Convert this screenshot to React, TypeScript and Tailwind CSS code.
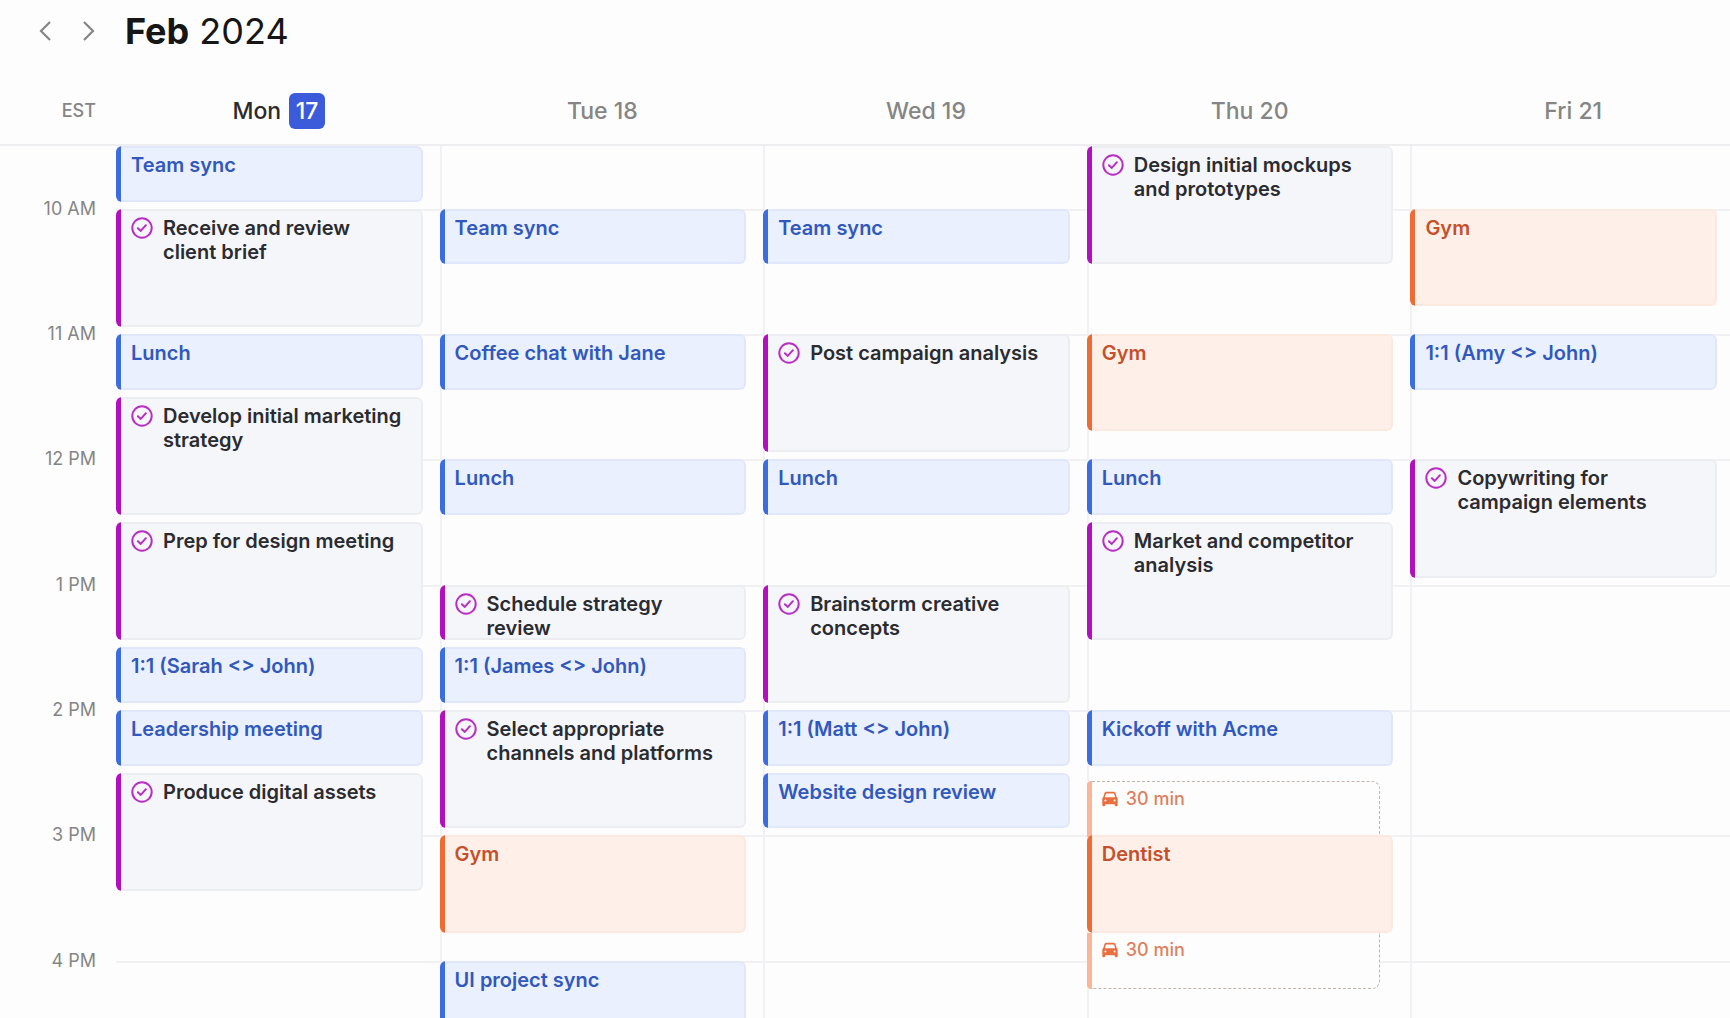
import React from 'react';
import clsx from 'clsx';

type Kind = 'meeting' | 'task' | 'personal';

type CalendarEvent = {
    title: string;
    kind: Kind;
    start: string;
    minutes: number;
    travel?: string;
};

type Day = {
    name: string;
    date: number;
    today?: boolean;
    events: CalendarEvent[];
};

// The visible part of the day starts at 9:30 and is cut in slots of 5 minutes
const DAY_START = 9 * 60 + 30;
const SLOT = 5;

const hours = [
    { label: '10 AM', time: '10:00' },
    { label: '11 AM', time: '11:00' },
    { label: '12 PM', time: '12:00' },
    { label: '1 PM', time: '13:00' },
    { label: '2 PM', time: '14:00' },
    { label: '3 PM', time: '15:00' },
    { label: '4 PM', time: '16:00' }
];

const days: Day[] = [
    {
        name: 'Mon',
        date: 17,
        today: true,
        events: [
            { title: 'Team sync', kind: 'meeting', start: '9:30', minutes: 30 },
            { title: 'Receive and review client brief', kind: 'task', start: '10:00', minutes: 60 },
            { title: 'Lunch', kind: 'meeting', start: '11:00', minutes: 30 },
            { title: 'Develop initial marketing strategy', kind: 'task', start: '11:30', minutes: 60 },
            { title: 'Prep for design meeting', kind: 'task', start: '12:30', minutes: 60 },
            { title: '1:1 (Sarah <> John)', kind: 'meeting', start: '13:30', minutes: 30 },
            { title: 'Leadership meeting', kind: 'meeting', start: '14:00', minutes: 30 },
            { title: 'Produce digital assets', kind: 'task', start: '14:30', minutes: 60 }
        ]
    },
    {
        name: 'Tue',
        date: 18,
        events: [
            { title: 'Team sync', kind: 'meeting', start: '10:00', minutes: 30 },
            { title: 'Coffee chat with Jane', kind: 'meeting', start: '11:00', minutes: 30 },
            { title: 'Lunch', kind: 'meeting', start: '12:00', minutes: 30 },
            { title: 'Schedule strategy review', kind: 'task', start: '13:00', minutes: 30 },
            { title: '1:1 (James <> John)', kind: 'meeting', start: '13:30', minutes: 30 },
            { title: 'Select appropriate channels and platforms', kind: 'task', start: '14:00', minutes: 60 },
            { title: 'Gym', kind: 'personal', start: '15:00', minutes: 50 },
            { title: 'UI project sync', kind: 'meeting', start: '16:00', minutes: 45 }
        ]
    },
    {
        name: 'Wed',
        date: 19,
        events: [
            { title: 'Team sync', kind: 'meeting', start: '10:00', minutes: 30 },
            { title: 'Post campaign analysis', kind: 'task', start: '11:00', minutes: 60 },
            { title: 'Lunch', kind: 'meeting', start: '12:00', minutes: 30 },
            { title: 'Brainstorm creative concepts', kind: 'task', start: '13:00', minutes: 60 },
            { title: '1:1 (Matt <> John)', kind: 'meeting', start: '14:00', minutes: 30 },
            { title: 'Website design review', kind: 'meeting', start: '14:30', minutes: 30 }
        ]
    },
    {
        name: 'Thu',
        date: 20,
        events: [
            { title: 'Design initial mockups and prototypes', kind: 'task', start: '9:30', minutes: 60 },
            { title: 'Gym', kind: 'personal', start: '11:00', minutes: 50 },
            { title: 'Lunch', kind: 'meeting', start: '12:00', minutes: 30 },
            { title: 'Market and competitor analysis', kind: 'task', start: '12:30', minutes: 60 },
            { title: 'Kickoff with Acme', kind: 'meeting', start: '14:00', minutes: 30 },
            { title: 'Dentist', kind: 'personal', start: '14:30', minutes: 110, travel: '30 min' }
        ]
    },
    {
        name: 'Fri',
        date: 21,
        events: [
            { title: 'Gym', kind: 'personal', start: '10:00', minutes: 50 },
            { title: '1:1 (Amy <> John)', kind: 'meeting', start: '11:00', minutes: 30 },
            { title: 'Copywriting for campaign elements', kind: 'task', start: '12:00', minutes: 60 }
        ]
    }
];

const boxStyles: Record<Kind, string> = {
    meeting: 'border-[#e1e7fa] bg-[#eaf0fe] text-[#3158bd]',
    task: 'border-[#ecedf1] bg-[#f5f6fa] text-[#2a2b30]',
    personal: 'border-[#fde8df] bg-[#fef0e9] text-[#c4512b]'
};

const barStyles: Record<Kind, string> = {
    meeting: 'bg-[#3b6ce0]',
    task: 'bg-[#b30fc0]',
    personal: 'bg-[#ee6b35]'
};

const rowOf = (time: string) => {
    const [h, m] = time.split(':').map(Number);
    return (h * 60 + m - DAY_START) / SLOT + 1;
};

const CheckIcon = () => (
    <svg viewBox="0 0 22 22" fill="none" stroke="#b92fc4" strokeWidth="2" strokeLinecap="round" strokeLinejoin="round" className="mt-px size-[22px] shrink-0" aria-hidden="true">
        <circle cx="11" cy="11" r="9.7" />
        <path d="M6.9 11.2 L9.8 13.9 L14.9 8.2" />
    </svg>
);

const CarIcon = () => (
    <svg viewBox="0 0 16 16" fill="#ea6f40" fillRule="evenodd" className="size-4" aria-hidden="true">
        <path d="M4.5 .8h7c1.1 0 1.9.6 2.2 1.6l.9 3.4c.7.5 1.1 1.3 1.1 2.2v6c0 .7-.4 1.2-1.1 1.2h-.8c-.7 0-1.1-.5-1.1-1.2v-.8H3.3v.8c0 .7-.4 1.2-1.1 1.2h-.8c-.7 0-1.1-.5-1.1-1.2V8c0-.9.4-1.7 1.1-2.2l.9-3.4C2.6 1.4 3.4.8 4.5.8zM4.700 2.400c-.5 0-.8.2-.9.6l-.9 3.200h10.200l-.9-3.200c-.1-.4-.4-.6-.9-.6zM3.400 8.500a1 1 0 1 0 0 2 1 1 0 0 0 0-2zM12.600 8.500a1 1 0 1 0 0 2 1 1 0 0 0 0-2z" />
    </svg>
);

const EventBox = ({ event }: { event: CalendarEvent }) => (
    <div className="flex h-full overflow-hidden rounded-md">
        <div className={clsx('w-[5px] shrink-0 rounded-l-sm', barStyles[event.kind])} />
        <div className={clsx('flex flex-1 gap-2.5 rounded-r-md border-2 border-l-0 pt-[5px] pr-4 pl-2.5 text-xl leading-6 font-semibold', boxStyles[event.kind])}>
            {event.kind === 'task' && <CheckIcon />}
            <span>{event.title}</span>
        </div>
    </div>
);

const TravelBox = ({ label, after }: { label: string; after?: boolean }) => (
    <div className="mr-[13px] flex h-14 bg-[#fdfdfd]">
        <div className={clsx('w-[5px] shrink-0 bg-[#fbb697]', after ? 'rounded-bl-sm' : 'rounded-tl-sm')} />
        <div
            className={clsx(
                'flex flex-1 items-start gap-2 border-r border-dashed border-[#c4b4af] pt-[5px] pl-2.5 text-lg leading-6 font-medium text-[#dd8161]',
                after ? 'rounded-br-lg border-b' : 'rounded-tr-lg border-t'
            )}
        >
            <span className="flex h-6 items-center"><CarIcon /></span>
            <span>{label}</span>
        </div>
    </div>
);

const DayColumn = ({ day, first }: { day: Day; first: boolean }) => (
    <div className="grid min-w-0 grid-cols-1 grid-rows-[repeat(90,minmax(0,1fr))]">
        {!first && <div className="col-start-1 row-span-full border-l-2 border-[#f1f1f3]" />}
        {hours.map((hour) => (
            <div key={hour.time} className="col-start-1 h-0 border-t-2 border-[#f1f1f3]" style={{ gridRowStart: rowOf(hour.time) }} />
        ))}
        {day.events.map((event) => (
            <div
                key={event.start}
                className="z-10 col-start-1 mr-[17px] mb-[7px]"
                style={{ gridRow: `${rowOf(event.start)} / span ${event.minutes / SLOT}` }}
            >
                {event.travel ? (
                    <div className="flex flex-col pt-2">
                        <TravelBox label={event.travel} />
                        <div className="z-10 -mt-0.5 h-[98px]">
                            <EventBox event={event} />
                        </div>
                        <TravelBox label={event.travel} after />
                    </div>
                ) : (
                    <EventBox event={event} />
                )}
            </div>
        ))}
    </div>
);

const App: React.FC = () => {
    return (
        <main className="flex h-screen flex-col overflow-hidden bg-[#fdfdfd] font-['Inter',sans-serif]">
            {/* Month navigation */}
            <header className="flex h-[62px] shrink-0 items-center pl-[31px]">
                <button type="button" aria-label="Previous week" className="flex h-8 w-7 items-center justify-center">
                    <svg viewBox="0 0 12 20" fill="none" stroke="#858585" strokeWidth="2.2" className="h-5 w-3" aria-hidden="true">
                        <path d="M11 1 L2 10 L11 19" />
                    </svg>
                </button>
                <button type="button" aria-label="Next week" className="ml-4 flex h-8 w-7 items-center justify-center">
                    <svg viewBox="0 0 12 20" fill="none" stroke="#858585" strokeWidth="2.2" className="h-5 w-3" aria-hidden="true">
                        <path d="M1 1 L10 10 L1 19" />
                    </svg>
                </button>
                <h1 className="ml-[22px] text-4xl text-[#161616]">
                    <strong className="font-bold">Feb</strong> 2024
                </h1>
            </header>

            {/* Day names */}
            <div className="flex h-[84px] shrink-0 border-b-2 border-[#eeeef0] pt-[31px]">
                <div className="flex h-9 w-[116px] shrink-0 items-center justify-end pr-5 text-lg font-medium text-[#858585]">EST</div>
                <div className="-mr-1 grid flex-1 grid-cols-5">
                    {days.map((day) => (
                        <div
                            key={day.name}
                            className={clsx(
                                'flex h-9 items-center justify-center gap-2 pl-0.5 text-[23px] font-medium',
                                day.today ? 'text-[#2b2b2b]' : 'text-[#858585]'
                            )}
                        >
                            {day.today ? (
                                <>
                                    <span>{day.name}</span>
                                    <span className="flex size-9 items-center justify-center rounded-md bg-[#3b5bdb] text-white">{day.date}</span>
                                </>
                            ) : (
                                <span>{day.name} {day.date}</span>
                            )}
                        </div>
                    ))}
                </div>
            </div>

            {/* Schedule */}
            <div className="flex h-[940px] shrink-0">
                <div className="grid w-[116px] shrink-0 grid-rows-[repeat(90,minmax(0,1fr))] pr-5">
                    {hours.map((hour) => (
                        <div
                            key={hour.time}
                            className="flex items-center justify-end text-lg text-[#858585]"
                            style={{ gridRow: `${rowOf(hour.time) - 2} / span 4` }}
                        >
                            {hour.label}
                        </div>
                    ))}
                </div>
                <div className="-mr-1 grid flex-1 grid-cols-5 grid-rows-1">
                    {days.map((day, index) => (
                        <DayColumn key={day.name} day={day} first={index === 0} />
                    ))}
                </div>
            </div>
        </main>
    );
};

export default App;
